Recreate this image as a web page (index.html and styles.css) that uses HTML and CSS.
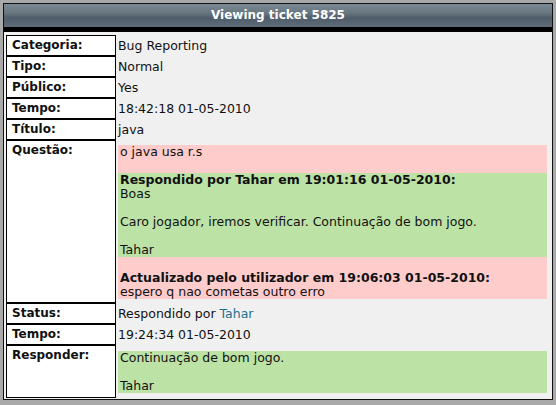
FILE: index.html
```html
<!DOCTYPE html>
<html lang="pt">
<head>
  <meta charset="UTF-8">
  <meta name="viewport" content="width=device-width, initial-scale=1.0">
  <title>Viewing ticket 5825</title>
  <link rel="stylesheet" href="styles.css">
</head>
<body>

<!-- Ticket box -->
<div class="ticket">
  <div class="ticket-head">Viewing ticket 5825</div>

  <div class="ticket-body">
    <table class="ticket-info" cellspacing="0">
      <tr><td class="lbl">Categoria:</td><td class="val">Bug Reporting</td></tr>
      <tr><td class="lbl">Tipo:</td><td class="val">Normal</td></tr>
      <tr><td class="lbl">Público:</td><td class="val">Yes</td></tr>
      <tr><td class="lbl">Tempo:</td><td class="val">18:42:18 01-05-2010</td></tr>
      <tr><td class="lbl">Título:</td><td class="val">java</td></tr>
      <tr>
        <td class="lbl">Questão:</td>
        <td class="val">
          <div class="thread">
            <div class="msg msg-user msg-first">o java usa r.s</div>
            <div class="msg msg-staff">
              <b>Respondido por Tahar em 19:01:16 01-05-2010:</b><br>
              Boas<br><br>
              Caro jogador, iremos verificar. Continuação de bom jogo.<br><br>
              Tahar
            </div>
            <div class="msg msg-user msg-update">
              <b>Actualizado pelo utilizador em 19:06:03 01-05-2010:</b><br>
              espero q nao cometas outro erro
            </div>
          </div>
        </td>
      </tr>
      <tr><td class="lbl">Status:</td><td class="val">Respondido por <a href="#" class="staff-link">Tahar</a></td></tr>
      <tr><td class="lbl">Tempo:</td><td class="val">19:24:34 01-05-2010</td></tr>
      <tr>
        <td class="lbl">Responder:</td>
        <td class="val">
          <div class="msg msg-staff msg-reply">
            Continuação de bom jogo.<br><br>
            Tahar
          </div>
        </td>
      </tr>
    </table>
  </div>
</div>

</body>
</html>
```

FILE: styles.css
```css
/* page */
body {
  margin: 0;
  background-color: #a9a9a9;
  font-family: "DejaVu Sans", Verdana, sans-serif;
  font-size: 12.5px;
  line-height: 15px;
  color: #111;
}

/* outer box */
.ticket {
  margin: 3px 3px 0 3px;
  border: 1px solid #111;
  background-color: #f0f0f0;
}

.ticket-head {
  height: 23px;
  line-height: 23px;
  text-align: center;
  color: #fff;
  font-weight: bold;
  font-size: 12px;
  background: linear-gradient(#7b8995, #68767f 40%, #4f5d6a 60%, #5f6c78);
  border-bottom: 5px solid #000;
}

.ticket-body {
  padding: 3px 3px 1px 2px;
}

/* info table */
.ticket-info {
  width: 100%;
  border-collapse: separate;
}

.ticket-info td {
  vertical-align: top;
}

.lbl {
  width: 99px;
  padding: 2px 4px 2px 5px;
  border: 1px solid #000;
  background-color: #fff;
  font-weight: bold;
  font-size: 12px;
}

.val {
  padding: 3px 2px;
}

.staff-link {
  color: #1e6f8f;
  text-decoration: none;
}

/* messages */
.thread {
  margin: 2px 0 1px 0;
}

.msg {
  padding: 0 2px;
  line-height: 14px;
}

.msg-user {
  background-color: #ffcccc;
}

.msg-staff {
  background-color: #bce2a5;
}

.msg-first {
  padding-bottom: 14px;
}

.msg-update {
  padding-top: 14px;
}

.msg-reply {
  margin: 3px 0 2px 0;
}
```
